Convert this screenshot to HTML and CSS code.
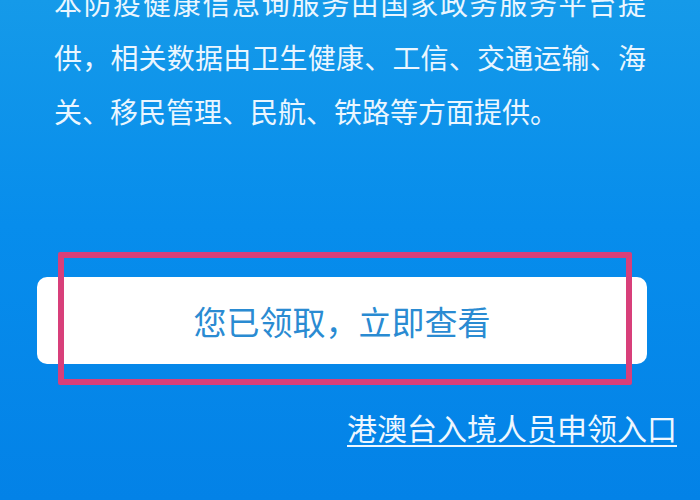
FILE: index.html
```html
<!DOCTYPE html>
<html lang="zh-CN">
<head>
<meta charset="utf-8">
<link rel="stylesheet" href="styles.css">
</head>
<body>
<div class="page">
  <p class="intro">本防疫健康信息询服务由国家政务服务平台提供，相关数据由卫生健康、工信、交通运输、海关、移民管理、民航、铁路等方面提供。</p>
  <div class="action">
    <div class="btn">您已领取，立即查看</div>
    <div class="highlight"></div>
  </div>
  <div class="link-row"><span class="link">港澳台入境人员申领入口</span></div>
</div>
</body>
</html>
```
FILE: styles.css
```css
html, body {
  margin: 0;
  padding: 0;
}
body {
  width: 700px;
  height: 500px;
  overflow: hidden;
  font-family: "Noto Sans CJK SC", "Noto Sans", sans-serif;
}
.page {
  width: 700px;
  height: 500px;
  overflow: hidden;
  background: linear-gradient(180deg, #159ae9 0%, #078dec 45%, #0382e7 100%);
  display: flex;
  flex-direction: column;
}
.intro {
  margin: -24px 0 0 54px;
  width: 592px;
  font-size: 28px;
  font-weight: 400;
  line-height: 54px;
  color: #eaf6ff;
  text-align: justify;
}
.action {
  position: relative;
  margin-top: 139px;
  padding: 0 53px 0 37px;
}
.btn {
  height: 87px;
  background: #ffffff;
  border-radius: 10px;
  display: flex;
  align-items: center;
  justify-content: center;
  font-size: 33px;
  color: #2a8bd2;
}
.highlight {
  position: absolute;
  left: 58px;
  top: -25px;
  width: 574px;
  height: 133px;
  box-sizing: border-box;
  border: 6px solid #d83f7a;
  border-radius: 2px;
}
.link-row {
  margin-top: 45px;
  display: flex;
  justify-content: flex-end;
  padding-right: 23px;
}
.link {
  font-size: 30px;
  line-height: 36px;
  color: #eef7ff;
  text-decoration: underline;
  text-decoration-thickness: 2px;
  text-underline-offset: 5px;
}
```
